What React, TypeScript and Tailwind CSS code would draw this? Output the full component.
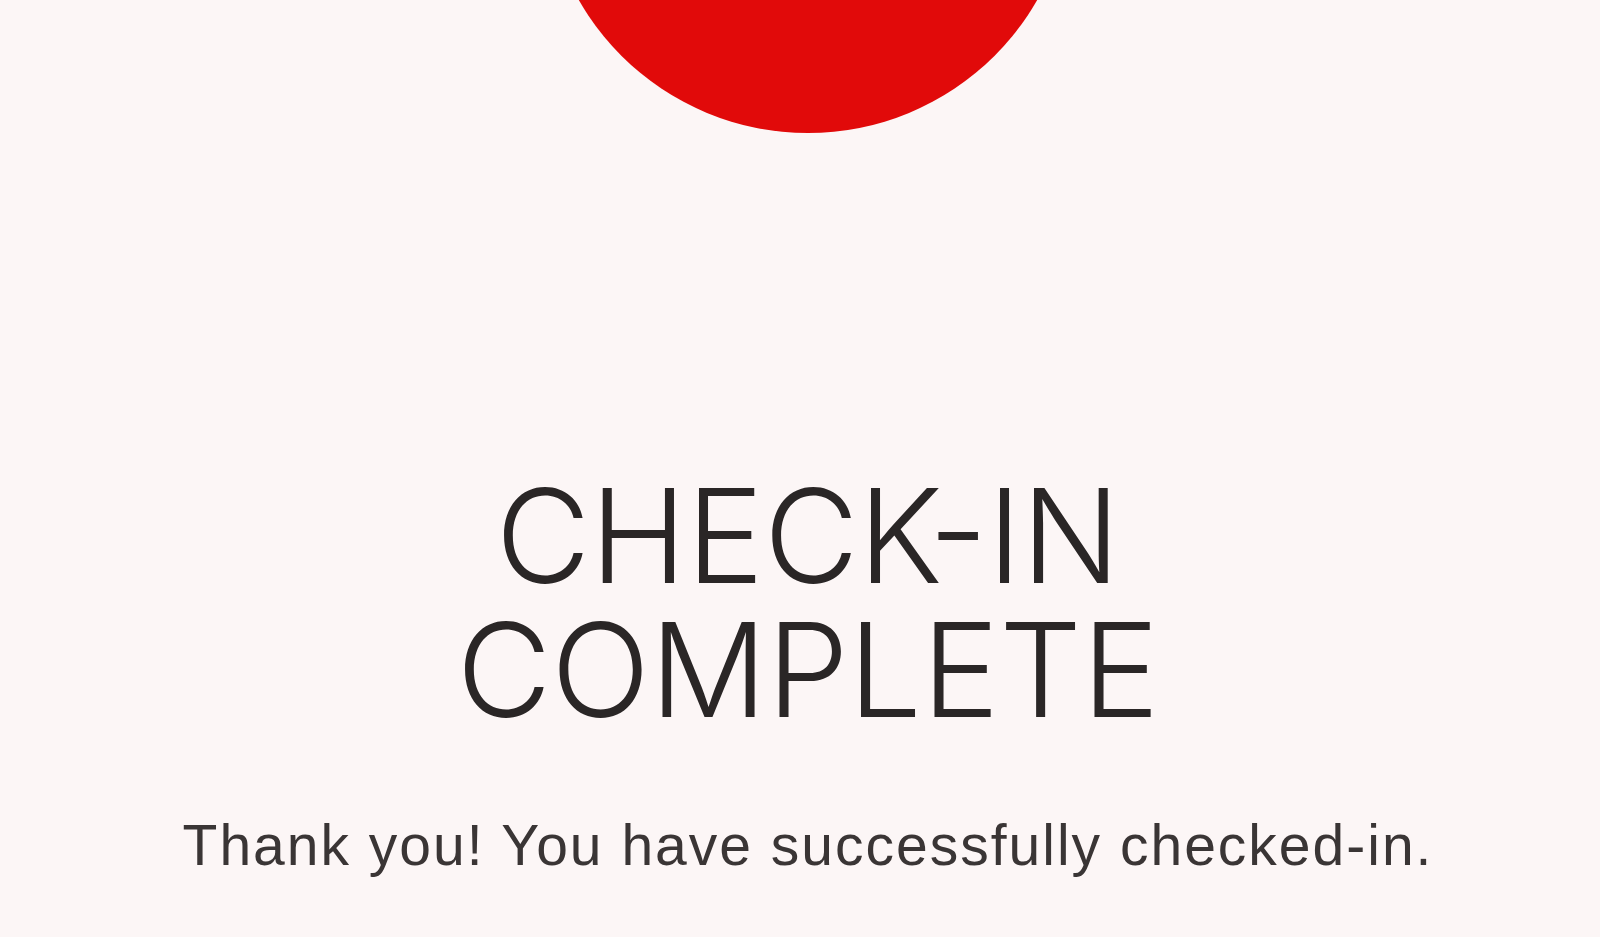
export default function App() {
    return (
        <div className="h-[937px] w-full overflow-hidden bg-[#fcf6f6]">
            <div className="flex w-full flex-col items-center pl-4">
                {/* red seal, cut off by the top edge */}
                <div className="mt-[-395px] h-[528px] w-[528px] shrink-0 rounded-full bg-[#e10a0a]" />

                <h1
                    className="mt-[336px] text-center text-[130px] font-light leading-[134px] text-[#2a2626]"
                    style={{ fontFamily: "Inter, 'Noto Sans', sans-serif" }}
                >
                    CHECK-IN
                    <br />
                    COMPLETE
                </h1>

                <p
                    className="mt-[72px] text-center text-[57px] leading-[72px] tracking-[2px] text-[#3a3535]"
                    style={{ fontFamily: "'Liberation Sans', Arial, sans-serif" }}
                >
                    Thank you! You have successfully checked-in.
                </p>
            </div>
        </div>
    );
}
